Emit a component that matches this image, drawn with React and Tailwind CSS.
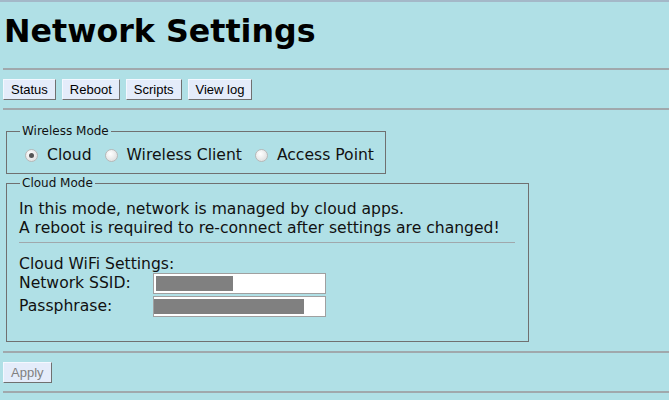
export default function App() {
  const btn =
    "h-[21px] px-[7px] bg-[#e4ecfa] border border-t-[#f4f8ff] border-l-[#f4f8ff] border-r-[#707070] border-b-[#707070] text-[13px] leading-none text-black whitespace-nowrap font-['Liberation_Sans',Arial,sans-serif]";
  return (
    <div className="w-[669px] h-[400px] overflow-hidden bg-[#b0e0e6] border-t-2 border-[#a4b8c8] font-['DejaVu_Sans',Verdana,sans-serif] text-[#111]">
      <h1 className="pl-[4px] pt-[9px] h-[66px] text-[31.7px] font-bold leading-[40px] text-black whitespace-nowrap">
        Network Settings
      </h1>
      <div className="ml-[3px] h-[2px] bg-[#a0a8ac]" />
      <div className="flex gap-[6px] pl-[3px] pt-[9px] h-[38px]">
        <button className={btn}>Status</button>
        <button className={btn}>Reboot</button>
        <button className={btn}>Scripts</button>
        <button className={btn}>View log</button>
      </div>
      <div className="ml-[3px] h-[2px] bg-[#a0a8ac]" />
      <fieldset className="ml-[6px] mt-[14px] w-[380px] h-[50px] border border-[#707070] px-[10px] pt-0">
        <legend className="px-[2px] ml-[3px] text-[12px] leading-[14px]">Wireless Mode</legend>
        <div className="flex items-center whitespace-nowrap text-[15.6px] leading-[20px] pl-[8px] pt-[7px]">
          <Radio checked />
          <span className="ml-[9px] mr-[13px]">Cloud</span>
          <Radio />
          <span className="ml-[9px] mr-[13px]">Wireless Client</span>
          <Radio />
          <span className="ml-[9px]">Access Point</span>
        </div>
      </fieldset>
      <fieldset className="ml-[6px] mt-[2px] w-[523px] h-[166px] border border-[#707070] px-[12px] pt-0">
        <legend className="px-[2px] ml-[1px] text-[12px] leading-[14px]">Cloud Mode</legend>
        <div className="text-[15.6px] leading-[19px] pt-[10px] whitespace-nowrap">
          <div>In this mode, network is managed by cloud apps.</div>
          <div>A reboot is required to re-connect after settings are changed!</div>
          <div className="mt-[4px] mb-[12px] h-px bg-[#a0a8ac] mr-[1px]" />
          <div className="leading-[18px]">Cloud WiFi Settings:</div>
          <div className="flex items-center h-[21px]">
            <span className="w-[134px]">Network SSID:</span>
            <div className="w-[173px] h-[21px] bg-white border border-[#a0a0a0] p-[2px] pl-[2px]">
              <div className="w-[77px] h-full bg-[#808080]" />
            </div>
          </div>
          <div className="flex items-center h-[22px] mt-[1px]">
            <span className="w-[134px]">Passphrase:</span>
            <div className="w-[173px] h-[21px] bg-white border border-[#a0a0a0] py-[2px]">
              <div className="w-[150px] h-full bg-[#808080]" />
            </div>
          </div>
        </div>
      </fieldset>
      <div className="ml-[3px] mt-[9px] h-[2px] bg-[#a0a8ac]" />
      <div className="pl-[3px] pt-[7px] h-[39px]">
        <button className={btn + " !text-[#808080]"}>Apply</button>
      </div>
      <div className="ml-[3px] -mt-[1px] h-[2px] bg-[#a0a8ac]" />
    </div>
  );
}

function Radio({ checked }) {
  return (
    <span className="inline-flex shrink-0 items-center justify-center w-[13px] h-[13px] rounded-full border border-[#b8b8b8] bg-[radial-gradient(circle_at_40%_35%,#ffffff,#d8d8d8)]">
      {checked && <span className="w-[5px] h-[5px] rounded-full bg-[#555]" />}
    </span>
  );
}
